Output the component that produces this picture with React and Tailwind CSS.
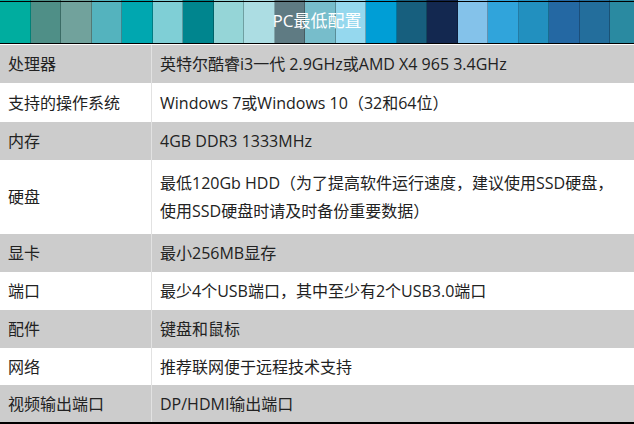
import React from 'react'

const stripes = [
  '#00ad9f', '#4f8f87', '#71a29c', '#54b3be', '#00a7b0', '#7fcfd6', '#00858e',
  '#95d5d7', '#acdde3', '#5f7b83', '#77bdcb', '#95d8ee', '#009ed6', '#175f7e',
  '#132850', '#84c2ea', '#30a4db', '#2290bf', '#2468a3', '#236e9c', '#2a8aa1',
]

const rows = [
  { k: '处理器', v: ['英特尔酷睿i3一代 2.9GHz或AMD X4 965 3.4GHz'], h: 'h-[38px]' },
  { k: '支持的操作系统', v: ['Windows 7或Windows 10（32和64位）'], h: 'h-[39px]' },
  { k: '内存', v: ['4GB DDR3 1333MHz'], h: 'h-[38px]' },
  {
    k: '硬盘',
    v: ['最低120Gb HDD（为了提高软件运行速度，建议使用SSD硬盘，', '使用SSD硬盘时请及时备份重要数据）'],
    h: 'h-[74px]',
  },
  { k: '显卡', v: ['最小256MB显存'], h: 'h-[38px]' },
  { k: '端口', v: ['最少4个USB端口，其中至少有2个USB3.0端口'], h: 'h-[38px]' },
  { k: '配件', v: ['键盘和鼠标'], h: 'h-[38px]' },
  { k: '网络', v: ['推荐联网便于远程技术支持'], h: 'h-[37px]' },
  { k: '视频输出端口', v: ['DP/HDMI输出端口'], h: 'h-[37px]' },
]

export default function App() {
  return (
    <div
      className="w-[634px] h-[424px] bg-white overflow-hidden text-[16px] text-[#222]"
      style={{ fontFamily: '"Open Sans", "Noto Sans CJK SC", sans-serif' }}
    >
      {/* colour band header */}
      <div className="relative h-[45px] border-b border-white">
        <div className="flex h-full overflow-hidden">
          {stripes.map((c, i) => (
            <div
              key={i}
              className="w-[30.5px] shrink-0 h-full border-r border-black/25"
              style={{ backgroundColor: c }}
            />
          ))}
        </div>
        <div className="absolute left-0 right-0 top-[1px] h-[1px] bg-black" />
        <div className="absolute left-0 right-0 bottom-0 h-[1px] bg-black" />
        <div className="absolute inset-0 flex items-center justify-center pb-[2px] text-white text-[17px]">
          PC最低配置
        </div>
      </div>

      <div className="border-b-2 border-black">
        {rows.map((r, i) => (
          <div
            key={r.k}
            className={`grid grid-cols-[152px_1fr] ${r.h} ${i % 2 === 0 ? 'bg-[#cccccc]' : 'bg-white'}`}
          >
            <div className="flex items-center pl-[8px] border-r border-[#e2e2e2]">{r.k}</div>
            <div className="flex flex-col justify-center pl-[8px] leading-[28px]">
              {r.v.map((line) => (
                <div key={line}>{line}</div>
              ))}
            </div>
          </div>
        ))}
      </div>
    </div>
  )
}
